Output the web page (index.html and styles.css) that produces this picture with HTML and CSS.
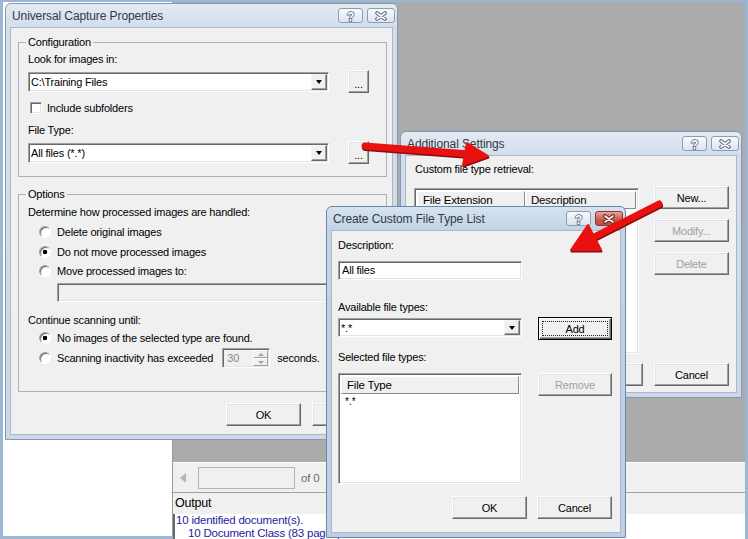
FILE: index.html
```html
<!DOCTYPE html>
<html lang="en">
<head>
    <meta charset="UTF-8">
    <meta name="viewport" content="width=device-width, initial-scale=1.0">
    <title>Universal Capture Properties</title>
    <link rel="stylesheet" href="styles.css">
</head>
<body>
    <div class="desktop">
        <div class="app">
            <div class="side"></div>
            <div class="workspace">
                <div class="mdi"></div>
                <div class="pager">
                    <span class="pager-prev"></span>
                    <span class="pager-box"></span>
                    <span class="pager-of">of 0</span>
                </div>
                <div class="output">
                    <div class="output-head">Output</div>
                    <div class="output-body">
                        <div>10 identified document(s).</div>
                        <div class="indent">10 Document Class (83 pages)</div>
                    </div>
                </div>
            </div>
        </div>

        <!-- Universal Capture Properties -->
        <div class="window capture">
            <div class="titlebar">
                <span class="title">Universal Capture Properties</span>
                <span class="tbtn help">
                    <svg width="9" height="12" viewBox="0 0 9 12"><text x="4.5" y="10.5" text-anchor="middle" font-family="Liberation Sans" font-weight="bold" font-size="12" fill="#fff" stroke="#56667b" stroke-width="1.5" paint-order="stroke">?</text></svg>
                </span>
                <span class="tbtn close">
                    <svg width="12" height="10" viewBox="0 0 12 10"><path d="M2 2L10 8M10 2L2 8" stroke="#56667b" stroke-width="3.6" stroke-linecap="round"/><path d="M2 2L10 8M10 2L2 8" stroke="#fff" stroke-width="1.6" stroke-linecap="round"/></svg>
                </span>
            </div>
            <div class="client">
                <fieldset class="group config">
                    <legend>Configuration</legend>
                    <div class="line">Look for images in:</div>
                    <div class="field-row">
                        <div class="combo sunken"><span class="combo-text">C:\Training Files</span><span class="drop"><i class="tri"></i></span></div>
                        <span class="btn browse">...</span>
                    </div>
                    <div class="check-row"><span class="checkbox sunken"></span>Include subfolders</div>
                    <div class="line file-type">File Type:</div>
                    <div class="field-row">
                        <div class="combo sunken"><span class="combo-text">All files (*.*)</span><span class="drop"><i class="tri"></i></span></div>
                        <span class="btn browse">...</span>
                    </div>
                </fieldset>

                <fieldset class="group options">
                    <legend>Options</legend>
                    <div class="line">Determine how processed images are handled:</div>
                    <div class="radio-row r1"><span class="radio"></span>Delete original images</div>
                    <div class="radio-row r2"><span class="radio on"></span>Do not move processed images</div>
                    <div class="radio-row r3"><span class="radio"></span>Move processed images to:</div>
                    <div class="move-path sunken"></div>
                    <div class="line continue">Continue scanning until:</div>
                    <div class="radio-row r4"><span class="radio on"></span>No images of the selected type are found.</div>
                    <div class="radio-row spin-row"><span class="radio"></span>Scanning inactivity has exceeded
                        <span class="spin sunken"><span class="spin-val">30</span><span class="spin-btns"><span class="spin-up"><i class="tri up"></i></span><span class="spin-down"><i class="tri"></i></span></span></span>
                        <span class="seconds">seconds.</span>
                    </div>
                </fieldset>

                <div class="actions">
                    <span class="btn">OK</span>
                    <span class="btn">Cancel</span>
                </div>
            </div>
        </div>

        <!-- Additional Settings -->
        <div class="window settings">
            <div class="titlebar">
                <span class="title">Additional Settings</span>
                <span class="tbtn help">
                    <svg width="9" height="12" viewBox="0 0 9 12"><text x="4.5" y="10.5" text-anchor="middle" font-family="Liberation Sans" font-weight="bold" font-size="12" fill="#fff" stroke="#56667b" stroke-width="1.5" paint-order="stroke">?</text></svg>
                </span>
                <span class="tbtn close">
                    <svg width="12" height="10" viewBox="0 0 12 10"><path d="M2 2L10 8M10 2L2 8" stroke="#56667b" stroke-width="3.6" stroke-linecap="round"/><path d="M2 2L10 8M10 2L2 8" stroke="#fff" stroke-width="1.6" stroke-linecap="round"/></svg>
                </span>
            </div>
            <div class="client">
                <div class="settings-body">
                    <div class="settings-main">
                        <div class="line">Custom file type retrieval:</div>
                        <div class="list ext-list sunken">
                            <div class="list-head">
                                <span class="col-head c-ext">File Extension</span>
                                <span class="col-head c-desc">Description</span>
                            </div>
                        </div>
                    </div>
                    <div class="settings-side">
                        <span class="btn">New...</span>
                        <span class="btn disabled">Modify...</span>
                        <span class="btn disabled">Delete</span>
                    </div>
                </div>
                <div class="actions">
                    <span class="btn">OK</span>
                    <span class="btn">Cancel</span>
                </div>
            </div>
        </div>

        <!-- Create Custom File Type List (active) -->
        <div class="window custom active">
            <div class="titlebar">
                <span class="title">Create Custom File Type List</span>
                <span class="tbtn help">
                    <svg width="9" height="12" viewBox="0 0 9 12"><text x="4.5" y="10.5" text-anchor="middle" font-family="Liberation Sans" font-weight="bold" font-size="12" fill="#fff" stroke="#56667b" stroke-width="1.5" paint-order="stroke">?</text></svg>
                </span>
                <span class="tbtn close">
                    <svg width="12" height="10" viewBox="0 0 12 10"><path d="M2 2L10 8M10 2L2 8" stroke="#5a1f18" stroke-width="3.6" stroke-linecap="round"/><path d="M2 2L10 8M10 2L2 8" stroke="#fff" stroke-width="1.6" stroke-linecap="round"/></svg>
                </span>
            </div>
            <div class="client">
                <div class="line">Description:</div>
                <div class="textbox desc sunken">All files</div>
                <div class="line avail">Available file types:</div>
                <div class="pair-row">
                    <div class="combo small sunken"><span class="combo-text">*.*</span><span class="drop"><i class="tri"></i></span></div>
                    <span class="btn default"><span class="focus">Add</span></span>
                </div>
                <div class="line selected">Selected file types:</div>
                <div class="pair-row list-row">
                    <div class="list type-list sunken">
                        <div class="list-head">
                            <span class="col-head c-type">File Type</span>
                        </div>
                        <div class="list-item">*.*</div>
                    </div>
                    <span class="btn disabled">Remove</span>
                </div>
                <div class="actions">
                    <span class="btn">OK</span>
                    <span class="btn">Cancel</span>
                </div>
            </div>
        </div>

        <svg class="arrows" width="748" height="539" viewBox="0 0 748 539">
            <g fill="#8a0b0b" stroke="#8a0b0b" transform="translate(0.5 1.5)">
                <line x1="365" y1="146" x2="469" y2="154" stroke-width="7" stroke-linecap="round"/>
                <polygon points="488,156 467,143 463,165" stroke-width="2" stroke-linejoin="round"/>
                <line x1="659" y1="204" x2="594" y2="237" stroke-width="7" stroke-linecap="round"/>
                <polygon points="571,250 588,225 601,250" stroke-width="2" stroke-linejoin="round"/>
            </g>
            <g fill="#e8110f" stroke="#e8110f">
                <line x1="365" y1="146" x2="469" y2="154" stroke-width="7" stroke-linecap="round"/>
                <polygon points="488,156 467,143 463,165" stroke-width="2" stroke-linejoin="round"/>
                <line x1="659" y1="204" x2="594" y2="237" stroke-width="7" stroke-linecap="round"/>
                <polygon points="571,250 588,225 601,250" stroke-width="2" stroke-linejoin="round"/>
            </g>
        </svg>
    </div>
</body>
</html>
```

FILE: styles.css
```css
* {
    box-sizing: border-box;
}

body {
    margin: 0;
    font-family: "Liberation Sans", Arial, sans-serif;
    font-size: 11px;
    letter-spacing: -0.2px;
    color: #000;
}

.desktop {
    position: relative;
    width: 748px;
    height: 539px;
    overflow: hidden;
    background: #fff;
}

/* application behind the dialogs */
.app {
    display: grid;
    grid-template-columns: 169px 1fr;
    width: 748px;
    height: 539px;
    border-style: solid;
    border-color: #9cb7d6;
    border-width: 2px 3px 3px 3px;
}

.side {
    background: #fff;
}

.workspace {
    display: flex;
    flex-direction: column;
    border-left: 1px solid #9a9a9a;
}

.mdi {
    flex: 1;
    background: #ababab;
}

.pager {
    height: 30px;
    display: flex;
    align-items: center;
    padding-left: 7px;
    background: #f0f0f0;
    border-top: 1px solid #fff;
}

.pager-prev {
    width: 0;
    height: 0;
    border-top: 5px solid transparent;
    border-bottom: 5px solid transparent;
    border-right: 6px solid #b5b5b5;
}

.pager-box {
    width: 97px;
    height: 22px;
    margin-left: 12px;
    background: #f0f0f0;
    border: 1px solid #b4b4b4;
}

.pager-of {
    margin-left: 6px;
    color: #6a6a6a;
    font-size: 11.5px;
}

.output {
    height: 44px;
    display: flex;
    flex-direction: column;
}

.output-head {
    height: 22px;
    line-height: 21px;
    padding-left: 2px;
    font-size: 12.5px;
    background: #f0f0f0;
    border-top: 1px solid #a0a0a0;
}

.output-body {
    flex: 1;
    background: #fff;
    border-left: 2px solid #6b6b6b;
    padding-left: 1px;
    color: #24239a;
    line-height: 12.5px;
    font-size: 11.5px;
}

.output-body .indent {
    padding-left: 12px;
}

/* window frames */
.window {
    position: absolute;
    display: flex;
    flex-direction: column;
    border: 1px solid #8598b0;
    border-radius: 6px 6px 0 0;
    padding: 0 4px 4px;
    background: linear-gradient(#e3ebf4, #d2deeb 23px, #cbd9e8);
}

.window.active {
    border-color: #6d87a6;
    background: linear-gradient(#d6e3f1, #c1d3e7 23px, #bccfe4);
}

.titlebar {
    flex: none;
    height: 23px;
    display: flex;
    align-items: center;
    padding-left: 2px;
    margin-right: -2px;
}

.title {
    flex: 1;
    font-size: 12px;
    letter-spacing: -0.1px;
    color: #34383f;
}

.tbtn {
    height: 15px;
    margin-left: 4px;
    display: flex;
    align-items: center;
    justify-content: center;
    border: 1px solid #8d9db1;
    border-radius: 3px;
    background: linear-gradient(#f7f9fc, #dde5ee);
}

.tbtn.help {
    width: 25px;
}

.tbtn.close {
    width: 28px;
}

.active .tbtn.close {
    border-color: #8a3a30;
    background: linear-gradient(#e9a99d, #d0584a 55%, #c24a3d);
}

.client {
    flex: 1;
    background: #f0f0f0;
    border: 1px solid #a9b9cb;
}

/* 3d borders */
.sunken {
    border: 1px solid;
    border-color: #a0a0a0 #fff #fff #a0a0a0;
    box-shadow: inset 1px 1px #696969, inset -1px -1px #e3e3e3;
}

.btn {
    width: 75px;
    height: 23px;
    display: flex;
    align-items: center;
    justify-content: center;
    background: #f0f0f0;
    border: 1px solid;
    border-color: #fff #696969 #696969 #fff;
    box-shadow: inset -1px -1px #a0a0a0, inset 1px 1px #e3e3e3;
}

.btn.disabled {
    color: #a0a0a0;
}

.btn.default {
    border: 1px solid #000;
    box-shadow: inset 1px 1px #fff, inset -1px -1px #696969, inset -2px -2px #a0a0a0;
    padding: 3px;
}

.btn.default .focus {
    width: 100%;
    height: 100%;
    display: flex;
    align-items: center;
    justify-content: center;
    border: 1px dotted #222;
}

.line {
    height: 13px;
    line-height: 13px;
    white-space: nowrap;
}

.tri {
    display: block;
    width: 0;
    height: 0;
    border-left: 3.5px solid transparent;
    border-right: 3.5px solid transparent;
    border-top: 4px solid #000;
}

.tri.up {
    border-top: 0;
    border-bottom: 3px solid #a0a0a0;
}

.combo {
    display: flex;
    align-items: center;
    width: 301px;
    height: 20px;
    background: #fff;
}

.combo-text {
    flex: 1;
    padding-left: 2px;
    white-space: nowrap;
}

.drop {
    width: 16px;
    height: 16px;
    margin-right: 1px;
    display: flex;
    align-items: center;
    justify-content: center;
    background: #f0f0f0;
    border: 1px solid;
    border-color: #f4f4f4 #696969 #696969 #f4f4f4;
    box-shadow: inset -1px -1px #a0a0a0;
}

/* Universal Capture Properties */
.capture {
    left: 5px;
    top: 3px;
    width: 393px;
    height: 437px;
}

.capture .client {
    padding: 8px 5px 0 7px;
}

.group {
    margin: 0;
    min-width: 0;
    padding: 4px 9px 12px 9px;
    border: 1px solid #b0b0b0;
}

.group legend {
    padding: 0 2px;
    margin-left: -2px;
    line-height: 13px;
}

.field-row {
    height: 23px;
    margin-top: 4px;
    display: flex;
    align-items: center;
}

.browse {
    width: 21px;
    margin-left: 19px;
    padding-top: 4px;
}

.check-row {
    height: 13px;
    margin-top: 8px;
    display: flex;
    align-items: center;
    padding-left: 2px;
}

.checkbox {
    width: 12px;
    height: 12px;
    margin-right: 5px;
    background: #fff;
}

.file-type {
    margin-top: 10px;
}

.options {
    margin-top: 11px;
    padding: 5px 9px 23px 9px;
}

.radio-row {
    height: 16px;
    display: flex;
    align-items: center;
    margin-left: 11px;
    white-space: nowrap;
}

.radio {
    width: 12px;
    height: 12px;
    margin-right: 6px;
    border-radius: 50%;
    border: 1px solid;
    border-color: #a0a0a0 #fff #fff #a0a0a0;
    box-shadow: inset 1px 1px #696969;
    background: #fff;
}

.radio.on {
    background: radial-gradient(circle, #000 0 2px, #fff 2.6px);
}

.r1 { margin-top: 5px; }
.r2 { margin-top: 4px; }
.r3 { margin-top: 3px; }
.r4 { margin-top: 3px; }

.move-path {
    width: 330px;
    height: 19px;
    margin: 4px 0 0 29px;
    background: #f0f0f0;
}

.continue {
    margin-top: 12px;
}

.spin-row {
    height: 20px;
    margin-top: 2px;
}

.spin {
    width: 48px;
    height: 20px;
    margin-left: 9px;
    display: flex;
    background: #f0f0f0;
}

.spin-val {
    flex: 1;
    padding: 3px 0 0 4px;
    color: #8a8a8a;
}

.spin-btns {
    width: 16px;
    display: flex;
    flex-direction: column;
    padding: 1px 1px 1px 0;
}

.spin-up,
.spin-down {
    flex: 1;
    display: flex;
    align-items: center;
    justify-content: center;
    border: 1px solid;
    border-color: #fff #a0a0a0 #a0a0a0 #fff;
}

.spin-down .tri {
    border-top: 3px solid #a0a0a0;
}

.seconds {
    margin-left: 7px;
}

.actions {
    display: flex;
    justify-content: flex-end;
    gap: 11px;
}

.capture .actions {
    margin-top: 11px;
}

/* Additional Settings */
.settings {
    left: 400px;
    top: 131px;
    width: 342px;
    height: 267px;
}

.settings .client {
    padding: 7px 7px 0 8px;
}

.settings-body {
    display: flex;
}

.settings-main {
    width: 225px;
}

.settings-main .line {
    padding-left: 1px;
}

.list {
    background: #fff;
    padding: 2px;
}

.ext-list {
    height: 166px;
    margin-top: 12px;
}

.list-head {
    display: flex;
    height: 18px;
}

.col-head {
    height: 18px;
    line-height: 16px;
    padding-left: 5px;
    font-size: 11.5px;
    background: #f0f0f0;
    border: 1px solid;
    border-color: #fff #8a8a8a #8a8a8a #fff;
}

.c-ext {
    width: 108px;
}

.c-desc {
    width: 111px;
}

.settings-side {
    margin-left: 15px;
    padding-top: 23px;
    display: flex;
    flex-direction: column;
    gap: 10px;
}

.settings .actions {
    margin-top: 9px;
}

/* Create Custom File Type List */
.custom {
    left: 326px;
    top: 206px;
    width: 300px;
    height: 332px;
}

.custom .client {
    padding: 8px 8px 0 6px;
}

.textbox {
    width: 184px;
    height: 19px;
    line-height: 17px;
    padding-left: 3px;
    background: #fff;
}

.desc {
    margin-top: 9px;
}

.avail {
    margin-top: 21px;
}

.pair-row {
    display: flex;
    align-items: flex-start;
    gap: 16px;
    margin-top: 3px;
}

.combo.small {
    width: 184px;
    height: 19px;
    margin-top: 1px;
}

.combo.small .drop {
    height: 15px;
}

.pair-row .btn {
    width: 74px;
}

.selected {
    margin-top: 11px;
}

.list-row {
    margin-top: 9px;
}

.type-list {
    width: 184px;
    height: 111px;
}

.c-type {
    width: 178px;
}

.list-item {
    padding: 2px 0 0 4px;
    font-size: 10px;
    letter-spacing: 0;
}

.custom .actions {
    margin-top: 12px;
    gap: 10px;
}

/* annotation arrows over everything */
.arrows {
    position: absolute;
    left: 0;
    top: 0;
    pointer-events: none;
}
```
